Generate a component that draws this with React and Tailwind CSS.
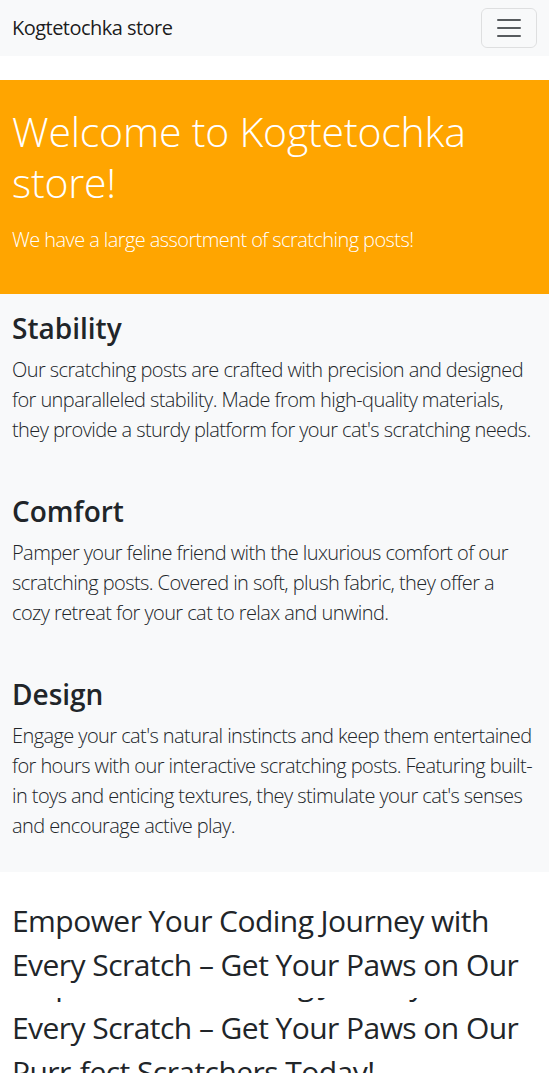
const sections = [
    {
        title: 'Stability',
        lines: [
            'Our scratching posts are crafted with precision and designed',
            'for unparalleled stability. Made from high-quality materials,',
            "they provide a sturdy platform for your cat's scratching needs.",
        ],
    },
    {
        title: 'Comfort',
        lines: [
            'Pamper your feline friend with the luxurious comfort of our',
            'scratching posts. Covered in soft, plush fabric, they offer a',
            'cozy retreat for your cat to relax and unwind.',
        ],
    },
    {
        title: 'Design',
        lines: [
            "Engage your cat's natural instincts and keep them entertained",
            'for hours with our interactive scratching posts. Featuring built-',
            "in toys and enticing textures, they stimulate your cat's senses",
            'and encourage active play.',
        ],
    },
]

const slogan = [
    'Empower Your Coding Journey with',
    'Every Scratch – Get Your Paws on Our',
    'Purr-fect Scratchers Today!',
]

function Slogan() {
    return (
        <p className="text-[30px] font-normal leading-[44px] tracking-[-0.55px] text-[#212529]">
            {slogan.map((line) => (
                <span key={line} className="block whitespace-nowrap">
                    {line}
                </span>
            ))}
        </p>
    )
}

export default function App() {
    return (
        <div className="min-h-screen overflow-hidden bg-white font-['Open_Sans',sans-serif] text-[#212529]">
            {/* navbar */}
            <nav className="flex h-[56px] items-center justify-between bg-[#f8f9fa] px-3">
                <span className="text-[20px] leading-[30px] tracking-[-0.53px] text-black/90">Kogtetochka store</span>
                <button className="flex h-[40px] w-[56px] items-center justify-center rounded-[6px] border border-black/10">
                    <svg width="30" height="30" viewBox="0 0 30 30" fill="none">
                        <path
                            stroke="rgba(33,37,41,0.75)"
                            strokeWidth="2"
                            strokeLinecap="round"
                            strokeMiterlimit="10"
                            d="M4 7h22M4 15h22M4 23h22"
                        />
                    </svg>
                </button>
            </nav>

            {/* hero */}
            <div className="mt-6 bg-[#ffa500] px-3 pb-[39px] pt-[26px] text-white">
                <h1 className="text-[41px] font-light leading-[51px] tracking-[-0.2px]">
                    <span className="block whitespace-nowrap">Welcome to Kogtetochka</span>
                    <span className="block">store!</span>
                </h1>
                <p className="mt-[17px] whitespace-nowrap text-[20px] font-light leading-[30px] tracking-[-0.58px]">
                    We have a large assortment of scratching posts!
                </p>
            </div>

            {/* features */}
            <section className="bg-[#f8f9fa] px-3 pb-[31px] pt-[17px]">
                {sections.map((s, i) => (
                    <div key={s.title} className={i > 0 ? 'mt-[49px]' : ''}>
                        <h2 className="text-[28px] font-semibold leading-[34px]">{s.title}</h2>
                        <p className="mt-[10px] text-[20px] font-light leading-[30px] tracking-[-0.58px]">
                            {s.lines.map((line) => (
                                <span key={line} className="block whitespace-nowrap">
                                    {line}
                                </span>
                            ))}
                        </p>
                    </div>
                ))}
            </section>

            {/* slogan, rendered twice like in the capture */}
            <div className="h-[126px] overflow-hidden px-3 pt-[27px]">
                <Slogan />
            </div>
            <div className="h-[100px] overflow-hidden px-3">
                <div className="-mt-[36px]">
                    <Slogan />
                </div>
            </div>
        </div>
    )
}
